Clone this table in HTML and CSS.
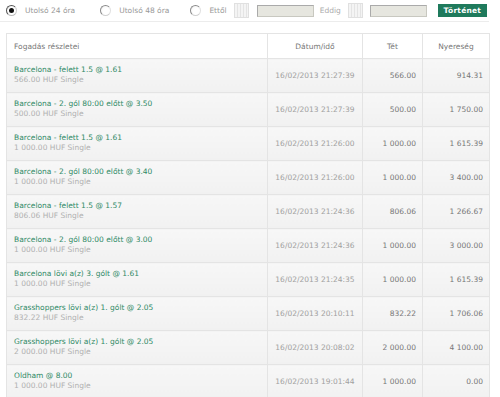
FILE: index.html
```html
<!DOCTYPE html>
<html lang="hu">
<head>
<meta charset="utf-8">
<title>Fogadások</title>
<link rel="stylesheet" href="styles.css">
</head>
<body>
<div class="filter">
  <label class="opt o1"><span class="radio checked"></span>Utolsó 24 óra</label>
  <label class="opt o2"><span class="radio"></span>Utolsó 48 óra</label>
  <label class="opt o3"><span class="radio"></span>Ettől</label>
  <span class="cal"></span>
  <span class="inp"></span>
  <span class="lbl">Eddig</span>
  <span class="cal cal2"></span>
  <span class="inp"></span>
  <button class="btn">Történet</button>
</div>
<table class="bets">
  <colgroup><col class="c1"><col class="c2"><col class="c3"><col class="c4"></colgroup>
  <thead>
    <tr><th class="l">Fogadás részletei</th><th>Dátum/idő</th><th>Tét</th><th>Nyereség</th></tr>
  </thead>
  <tbody>
    <tr><td class="l"><div class="sel">Barcelona - felett 1.5 @ 1.61</div><div class="sub">566.00 HUF Single</div></td><td class="d">16/02/2013 21:27:39</td><td class="n">566.00</td><td class="n">914.31</td></tr>
    <tr><td class="l"><div class="sel">Barcelona - 2. gól 80:00 előtt @ 3.50</div><div class="sub">500.00 HUF Single</div></td><td class="d">16/02/2013 21:27:39</td><td class="n">500.00</td><td class="n">1 750.00</td></tr>
    <tr><td class="l"><div class="sel">Barcelona - felett 1.5 @ 1.61</div><div class="sub">1 000.00 HUF Single</div></td><td class="d">16/02/2013 21:26:00</td><td class="n">1 000.00</td><td class="n">1 615.39</td></tr>
    <tr><td class="l"><div class="sel">Barcelona - 2. gól 80:00 előtt @ 3.40</div><div class="sub">1 000.00 HUF Single</div></td><td class="d">16/02/2013 21:26:00</td><td class="n">1 000.00</td><td class="n">3 400.00</td></tr>
    <tr><td class="l"><div class="sel">Barcelona - felett 1.5 @ 1.57</div><div class="sub">806.06 HUF Single</div></td><td class="d">16/02/2013 21:24:36</td><td class="n">806.06</td><td class="n">1 266.67</td></tr>
    <tr><td class="l"><div class="sel">Barcelona - 2. gól 80:00 előtt @ 3.00</div><div class="sub">1 000.00 HUF Single</div></td><td class="d">16/02/2013 21:24:36</td><td class="n">1 000.00</td><td class="n">3 000.00</td></tr>
    <tr><td class="l"><div class="sel">Barcelona lövi a(z) 3. gólt @ 1.61</div><div class="sub">1 000.00 HUF Single</div></td><td class="d">16/02/2013 21:24:35</td><td class="n">1 000.00</td><td class="n">1 615.39</td></tr>
    <tr><td class="l"><div class="sel">Grasshoppers lövi a(z) 1. gólt @ 2.05</div><div class="sub">832.22 HUF Single</div></td><td class="d">16/02/2013 20:10:11</td><td class="n">832.22</td><td class="n">1 706.06</td></tr>
    <tr><td class="l"><div class="sel">Grasshoppers lövi a(z) 1. gólt @ 2.05</div><div class="sub">2 000.00 HUF Single</div></td><td class="d">16/02/2013 20:08:02</td><td class="n">2 000.00</td><td class="n">4 100.00</td></tr>
    <tr><td class="l"><div class="sel">Oldham @ 8.00</div><div class="sub">1 000.00 HUF Single</div></td><td class="d">16/02/2013 19:01:44</td><td class="n">1 000.00</td><td class="n">0.00</td></tr>
  </tbody>
</table>
</body>
</html>
```
FILE: styles.css
```css
html, body {
  margin: 0;
  padding: 0;
  background: #ffffff;
}
body {
  font-family: "DejaVu Sans", Verdana, sans-serif;
  font-size: 7.5px;
  color: #888;
}
.filter {
  display: flex;
  align-items: center;
  height: 22px;
  width: 489px;
  border-bottom: 1px solid #ececec;
  padding-left: 6px;
  box-sizing: border-box;
  white-space: nowrap;
}
.filter > * {
  flex-shrink: 0;
}
.opt {
  display: flex;
  align-items: center;
  color: #999;
}
.o1 { margin-right: 25px; }
.o2 { margin-right: 21px; }
.o3 { margin-right: 7px; }
.radio {
  width: 11px;
  height: 11px;
  border-radius: 50%;
  border: 1px solid #8a8a8a;
  border-right-color: #e0e0e0;
  border-bottom-color: #d0d0d0;
  background: radial-gradient(circle at 60% 60%, #ffffff 40%, #f0f0f0 100%);
  box-sizing: border-box;
  margin-right: 8px;
  position: relative;
  flex-shrink: 0;
}
.radio.checked {
  border-color: #555;
  border-right-color: #ccc;
  border-bottom-color: #bbb;
}
.radio.checked::after {
  content: "";
  position: absolute;
  left: 2px;
  top: 2px;
  width: 5px;
  height: 5px;
  border-radius: 50%;
  background: #111;
}
.cal {
  width: 15px;
  height: 15px;
  border: 1px solid #e0e0e0;
  background: repeating-linear-gradient(90deg, #f4f4f4 0 2px, #e4e4e4 2px 3px);
  box-sizing: border-box;
  margin-right: 8px;
}
.cal2 {
  margin-right: 7px;
}
.inp {
  width: 57px;
  height: 12px;
  border: 1px solid #c8c8c0;
  border-top-color: #aaa;
  border-left-color: #aaa;
  background: #e6e6df;
  box-sizing: border-box;
  margin-right: 6px;
}
.lbl {
  color: #aaa;
  margin-right: 7px;
}
.btn {
  margin-left: 5px;
  height: 13px;
  width: 49px;
  padding: 0;
  border: 0;
  background: #1f7a5c;
  color: #fff;
  font-family: "DejaVu Sans", Verdana, sans-serif;
  font-size: 7.5px;
  font-weight: bold;
  letter-spacing: 0.2px;
}
.bets {
  margin: 11px 0 0 6px;
  width: 483px;
  border-collapse: collapse;
  table-layout: fixed;
}
.c1 { width: 261px; }
.c2 { width: 95px; }
.c3 { width: 60px; }
.c4 { width: 67px; }
.bets th, .bets td {
  border: 1px solid #e4e4e4;
}
.bets th {
  height: 24px;
  font-weight: normal;
  color: #777;
  text-align: center;
  background: #fff;
  padding: 0;
}
.bets th.l {
  text-align: left;
  padding-left: 7px;
}
.bets td {
  height: 34px;
  padding: 0 6px 1px;
  background: linear-gradient(#f7f7f7, #f1f1f1);
  box-sizing: border-box;
}
.bets td.l {
  padding-left: 7px;
}
.sel {
  color: #2f8a66;
  line-height: 10px;
}
.sub {
  color: #b0b0b0;
  line-height: 10px;
}
.d {
  text-align: center;
  color: #a0a0a0;
}
.n {
  text-align: right;
  color: #777;
}
```
